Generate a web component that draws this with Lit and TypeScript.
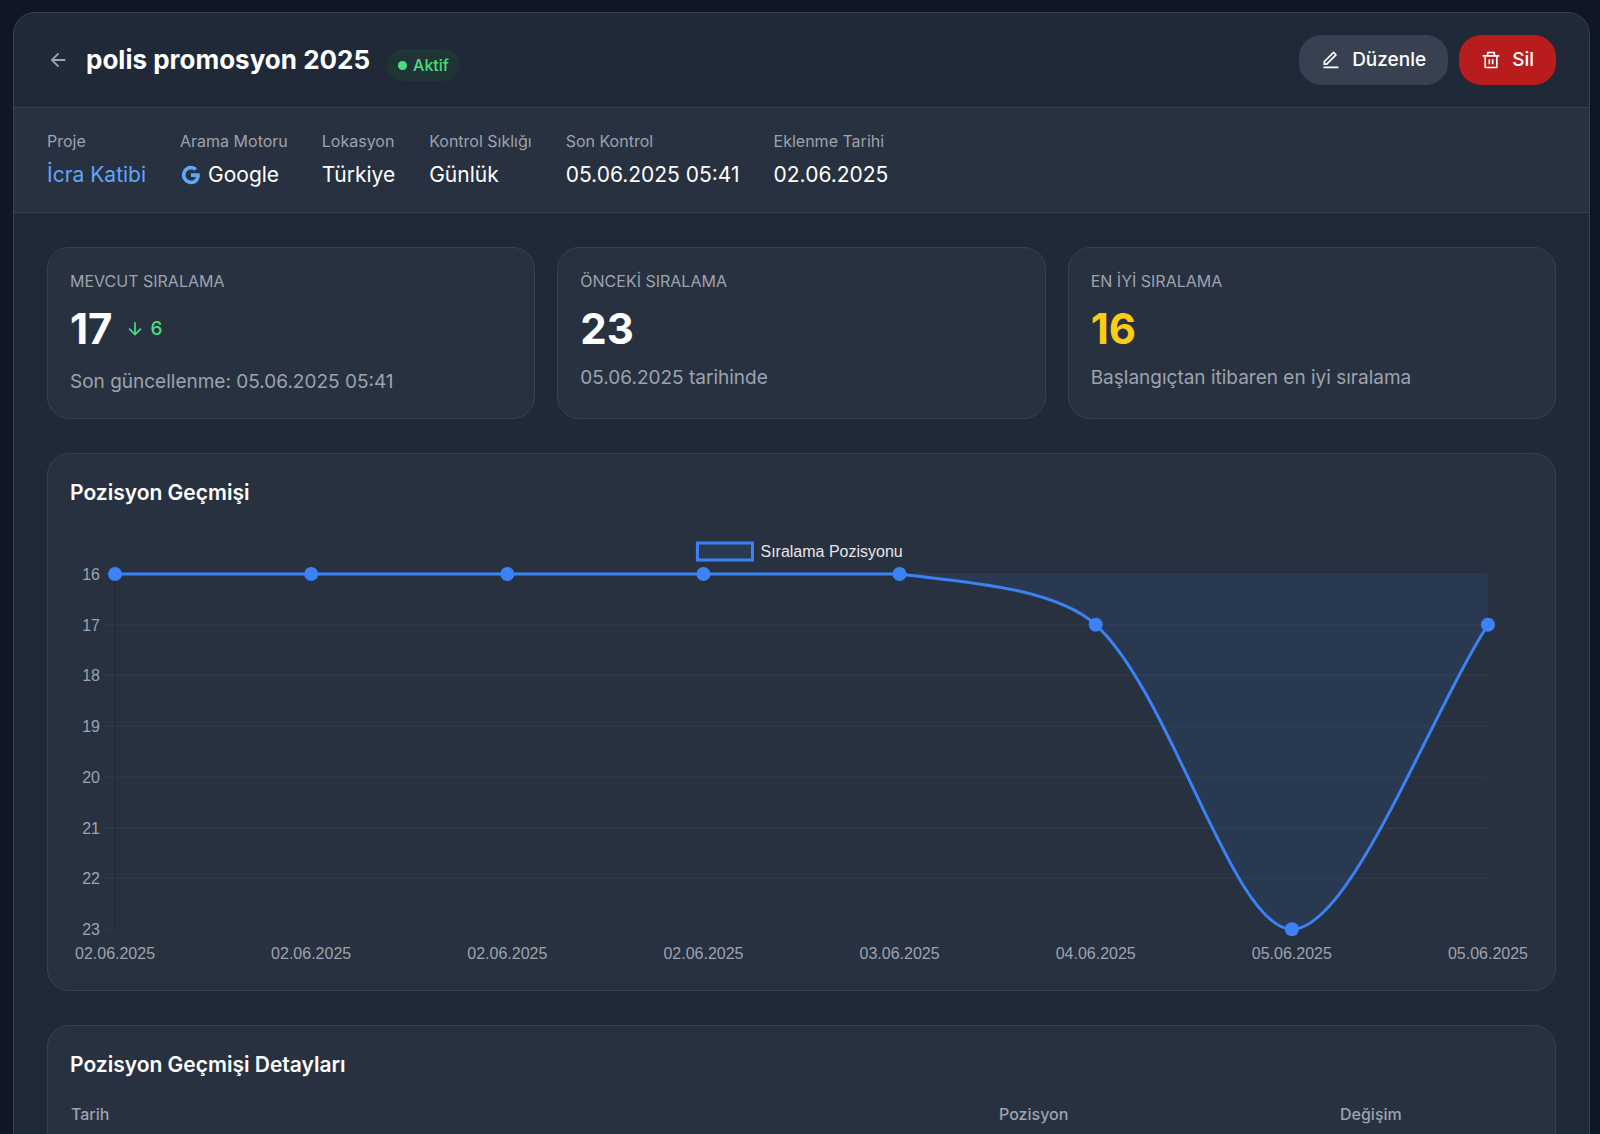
import { LitElement, html, svg, css } from "lit";
import { customElement, property } from "lit/decorators.js";

const ICONS = {
  back: "M7.82843 10.9999H20V12.9999H7.82843L13.1924 18.3638L11.7782 19.778L4 11.9999L11.7782 4.22168L13.1924 5.63589L7.82843 10.9999Z",
  down: "M13.0001 16.1716L18.3641 10.8076L19.7783 12.2218L12.0001 20L4.22192 12.2218L5.63614 10.8076L11.0001 16.1716V4H13.0001V16.1716Z",
  edit: "M6.41421 15.89L16.5563 5.74785L15.1421 4.33363L5 14.4758V15.89H6.41421ZM7.24264 17.89H3V13.6474L14.435 2.21231C14.8256 1.82179 15.4587 1.82179 15.8492 2.21231L18.6777 5.04074C19.0682 5.43126 19.0682 6.06443 18.6777 6.45495L7.24264 17.89ZM3 19.89H21V21.89H3V19.89Z",
  trash: "M17 6H22V8H20V21C20 21.5523 19.5523 22 19 22H5C4.44772 22 4 21.5523 4 21V8H2V6H7V3C7 2.44772 7.44772 2 8 2H16C16.5523 2 17 2.44772 17 3V6ZM18 8H6V20H18V8ZM9 11H11V17H9V11ZM13 11H15V17H13V11ZM9 4V6H15V4H9Z",
  google: "M3.06364 7.50914C4.70909 4.24092 8.09084 2 12 2C14.6954 2 16.959 2.99095 18.6909 4.60455L15.8227 7.47274C14.7864 6.48185 13.4681 5.97727 12 5.97727C9.39542 5.97727 7.19084 7.73637 6.40455 10.1C6.2045 10.7 6.09086 11.3409 6.09086 12C6.09086 12.6591 6.2045 13.3 6.40455 13.9C7.19084 16.2636 9.39542 18.0227 12 18.0227C13.3454 18.0227 14.4909 17.6682 15.3864 17.0682C16.4454 16.3591 17.15 15.3 17.3818 14.05H12V10.1818H21.4181C21.5364 10.8363 21.6 11.5182 21.6 12.2273C21.6 15.2727 20.5091 17.8363 18.6181 19.5773C16.9636 21.1046 14.7 22 12 22C8.09084 22 4.70909 19.7591 3.06364 16.4909C2.38638 15.1409 2 13.6136 2 12C2 10.3864 2.38638 8.85911 3.06364 7.50914Z",
};

const icon = (name: keyof typeof ICONS, cls: string) => html`
  <svg class=${cls} viewBox="0 0 24 24" fill="currentColor" aria-hidden="true"><path d=${ICONS[name]}></path></svg>
`;

interface Sample {
  date: string;
  rank: number;
}

const SAMPLES: Sample[] = [
  { date: "02.06.2025", rank: 16 },
  { date: "02.06.2025", rank: 16 },
  { date: "02.06.2025", rank: 16 },
  { date: "02.06.2025", rank: 16 },
  { date: "03.06.2025", rank: 16 },
  { date: "04.06.2025", rank: 17 },
  { date: "05.06.2025", rank: 23 },
  { date: "05.06.2025", rank: 17 },
];

/* Line chart with an inverted rank axis and a smoothed series. */
@customElement("rank-chart")
export class RankChart extends LitElement {
  @property({ attribute: false }) samples: Sample[] = [];

  static styles = css`
    :host {
      display: block;
    }
    .plot {
      display: block;
      width: 100%;
      height: auto;
      overflow: visible;
      font-family: "Liberation Sans", Arial, sans-serif;
      font-size: 16px;
    }
    .grid {
      stroke: #4b5563;
      stroke-opacity: 0.3;
    }
    .axis {
      stroke: #000;
      stroke-opacity: 0.15;
    }
    .tick {
      fill: #9ca3af;
    }
    .end {
      text-anchor: end;
    }
    .mid {
      text-anchor: middle;
    }
    .area {
      fill: #3b82f6;
      fill-opacity: 0.1;
    }
    .line {
      fill: none;
      stroke: #3b82f6;
      stroke-width: 3;
    }
    .dot {
      fill: #3b82f6;
    }
    .key {
      fill: #3b82f6;
      fill-opacity: 0.1;
      stroke: #3b82f6;
      stroke-width: 3;
    }
    .key-text {
      fill: #e5e7eb;
    }
  `;

  private readonly left = 45;
  private readonly right = 1417;
  private readonly top = 43;
  private readonly bottom = 398;
  private readonly tension = 0.3;

  private clamp(x: number, y: number): number[] {
    return [
      Math.min(Math.max(x, this.left), this.right),
      Math.min(Math.max(y, this.top), this.bottom),
    ];
  }

  private curve(pts: number[][]): string {
    const ctrl = pts.map((p, i) => {
      const a = pts[Math.max(i - 1, 0)];
      const b = pts[Math.min(i + 1, pts.length - 1)];
      const d0 = Math.hypot(p[0] - a[0], p[1] - a[1]);
      const d1 = Math.hypot(b[0] - p[0], b[1] - p[1]);
      const fa = (this.tension * d0) / (d0 + d1);
      const fb = (this.tension * d1) / (d0 + d1);
      const dx = b[0] - a[0];
      const dy = b[1] - a[1];
      return {
        before: this.clamp(p[0] - fa * dx, p[1] - fa * dy),
        after: this.clamp(p[0] + fb * dx, p[1] + fb * dy),
      };
    });
    return pts
      .map((p, i) => (i === 0 ? `M${p}` : `C${ctrl[i - 1].after} ${ctrl[i].before} ${p}`))
      .join(" ");
  }

  render() {
    const ranks = this.samples.map((s) => s.rank);
    const lo = Math.min(...ranks);
    const hi = Math.max(...ranks);
    const x = (i: number) => this.left + ((this.right - this.left) * i) / (this.samples.length - 1);
    const y = (r: number) => this.top + ((this.bottom - this.top) * (r - lo)) / (hi - lo);
    const ticks = Array.from({ length: hi - lo + 1 }, (_, i) => lo + i);
    const pts = this.samples.map((s, i) => [x(i), y(s.rank)]);
    const path = this.curve(pts);
    return html`
      <svg class="plot" viewBox="0 0 1462 437" role="img" aria-label="Sıralama Pozisyonu">
        ${ticks.map((t) => {
          const gy = Math.round(y(t));
          const end = t === hi ? this.left : this.right;
          return svg`
            <line class="grid" x1=${this.left - 11} x2=${end} y1=${gy} y2=${gy}></line>
            <text class="tick end" x="30" y=${gy + 6}>${t}</text>`;
        })}
        <line class="axis" x1=${this.left} x2=${this.left} y1=${this.top} y2=${this.bottom + 1}></line>
        <path class="area" d=${`${path} L${this.right} ${this.top} L${this.left} ${this.top} Z`}></path>
        <path class="line" d=${path}></path>
        ${pts.map((p) => svg`<circle class="dot" cx=${p[0]} cy=${p[1]} r="7"></circle>`)}
        ${this.samples.map((s, i) => svg`<text class="tick mid" x=${x(i)} y="428">${s.date}</text>`)}
        <rect class="key" x="627" y="12" width="55" height="17"></rect>
        <text class="key-text" x="690" y="26">Sıralama Pozisyonu</text>
      </svg>
    `;
  }
}

@customElement("app-root")
export class AppRoot extends LitElement {
  static styles = css`
    :host {
      display: block;
      box-sizing: border-box;
      height: 100vh;
      overflow: hidden;
      padding: 12px 10px 0 13px;
      background: #0f1625;
      color: #fff;
      font-family: Inter, "Liberation Sans", sans-serif;
      font-size: 19px;
      line-height: 28px;
    }
    * {
      box-sizing: border-box;
    }
    h1,
    h2,
    p,
    dl,
    dd {
      margin: 0;
    }
    .sheet {
      border: 1px solid #374151;
      border-radius: 22px;
      background: #1f2937;
      overflow: hidden;
    }
    .head {
      display: flex;
      align-items: center;
      justify-content: space-between;
      padding: 22px 33px;
      border-bottom: 1px solid #374151;
    }
    .heading {
      display: flex;
      align-items: center;
      gap: 17px;
    }
    .back {
      display: flex;
      color: #9ca3af;
    }
    .title {
      font-size: 26px;
      line-height: 40px;
      font-weight: 700;
    }
    .badge {
      display: inline-flex;
      align-items: center;
      gap: 6px;
      margin-top: 10px;
      padding: 4px 11px;
      border-radius: 16px;
      background: #1f3535;
      color: #4ade80;
      font-size: 16px;
      line-height: 24px;
      font-weight: 500;
    }
    .bullet {
      width: 9px;
      height: 9px;
      border-radius: 50%;
      background: #4ade80;
    }
    .actions {
      display: flex;
      gap: 11px;
    }
    .button {
      display: flex;
      align-items: center;
      gap: 11px;
      padding: 11px 22px;
      border: 0;
      border-radius: 22px;
      background: #374151;
      color: #fff;
      font: inherit;
      font-weight: 500;
    }
    .danger {
      background: #b91c1c;
    }
    .icon-md {
      display: block;
      width: 20px;
      height: 20px;
    }
    .icon-lg {
      display: block;
      width: 22px;
      height: 22px;
    }
    .meta {
      display: flex;
      gap: 34px;
      padding: 22px 33px;
      border-bottom: 1px solid #374151;
      background: #28313f;
    }
    .label {
      color: #9ca3af;
      font-size: 16px;
      line-height: 22px;
    }
    .value {
      display: flex;
      align-items: center;
      gap: 6px;
      margin-top: 8px;
      font-size: 21px;
      line-height: 30px;
    }
    .link {
      color: #60a5fa;
      text-decoration: none;
    }
    .brand {
      color: #60a5fa;
    }
    .body {
      display: grid;
      gap: 34px;
      padding: 34px 33px;
    }
    .cards {
      display: grid;
      grid-template-columns: repeat(3, 1fr);
      gap: 22px;
    }
    .card {
      border: 1px solid #374151;
      border-radius: 22px;
      padding: 22px;
      background: #28313f;
    }
    .score {
      display: flex;
      align-items: center;
      gap: 12px;
      margin-top: 12px;
      font-size: 42px;
      line-height: 50px;
      font-weight: 700;
    }
    .best {
      color: #facc15;
    }
    .delta {
      display: flex;
      align-items: center;
      gap: 6px;
      color: #4ade80;
      font-size: 19px;
      line-height: 28px;
      font-weight: 500;
    }
    .note {
      margin-top: 10px;
      color: #9ca3af;
      font-size: 19px;
    }
    .tall {
      margin-top: 14px;
    }
    .section {
      font-size: 21px;
      line-height: 34px;
      font-weight: 600;
    }
    .chart {
      margin-top: 21px;
    }
    .history {
      width: 100%;
      margin-top: 16px;
      border-collapse: collapse;
      table-layout: fixed;
    }
    .th {
      padding: 4px 1px;
      color: #9ca3af;
      font-size: 16px;
      line-height: 24px;
      font-weight: 500;
      text-align: left;
    }
    .details {
      padding-bottom: 60px;
    }
    .col-rank {
      width: 341px;
    }
    .col-change {
      width: 194px;
    }
  `;

  private meta(label: string, value: unknown) {
    return html`<div>
      <dt class="label">${label}</dt>
      <dd class="value">${value}</dd>
    </div>`;
  }

  render() {
    return html`
      <main class="sheet">
        <header class="head">
          <div class="heading">
            <a class="back" href="#" aria-label="Geri">${icon("back", "icon-lg")}</a>
            <h1 class="title">polis promosyon 2025</h1>
            <span class="badge"><span class="bullet"></span>Aktif</span>
          </div>
          <div class="actions">
            <button class="button" type="button">${icon("edit", "icon-md")}Düzenle</button>
            <button class="button danger" type="button">${icon("trash", "icon-md")}Sil</button>
          </div>
        </header>

        <dl class="meta">
          ${this.meta("Proje", html`<a class="link" href="#">İcra Katibi</a>`)}
          ${this.meta("Arama Motoru", html`${icon("google", "icon-lg brand")}Google`)}
          ${this.meta("Lokasyon", "Türkiye")}
          ${this.meta("Kontrol Sıklığı", "Günlük")}
          ${this.meta("Son Kontrol", "05.06.2025 05:41")}
          ${this.meta("Eklenme Tarihi", "02.06.2025")}
        </dl>

        <div class="body">
          <div class="cards">
            <section class="card">
              <div class="label">MEVCUT SIRALAMA</div>
              <div class="score">17<span class="delta">${icon("down", "icon-md")}6</span></div>
              <p class="note tall">Son güncellenme: 05.06.2025 05:41</p>
            </section>
            <section class="card">
              <div class="label">ÖNCEKİ SIRALAMA</div>
              <div class="score">23</div>
              <p class="note">05.06.2025 tarihinde</p>
            </section>
            <section class="card">
              <div class="label">EN İYİ SIRALAMA</div>
              <div class="score best">16</div>
              <p class="note">Başlangıçtan itibaren en iyi sıralama</p>
            </section>
          </div>

          <section class="card">
            <h2 class="section">Pozisyon Geçmişi</h2>
            <rank-chart class="chart" .samples=${SAMPLES}></rank-chart>
          </section>

          <section class="card details">
            <h2 class="section">Pozisyon Geçmişi Detayları</h2>
            <table class="history">
              <thead>
                <tr>
                  <th class="th" scope="col">Tarih</th>
                  <th class="th col-rank" scope="col">Pozisyon</th>
                  <th class="th col-change" scope="col">Değişim</th>
                </tr>
              </thead>
            </table>
          </section>
        </div>
      </main>
    `;
  }
}
